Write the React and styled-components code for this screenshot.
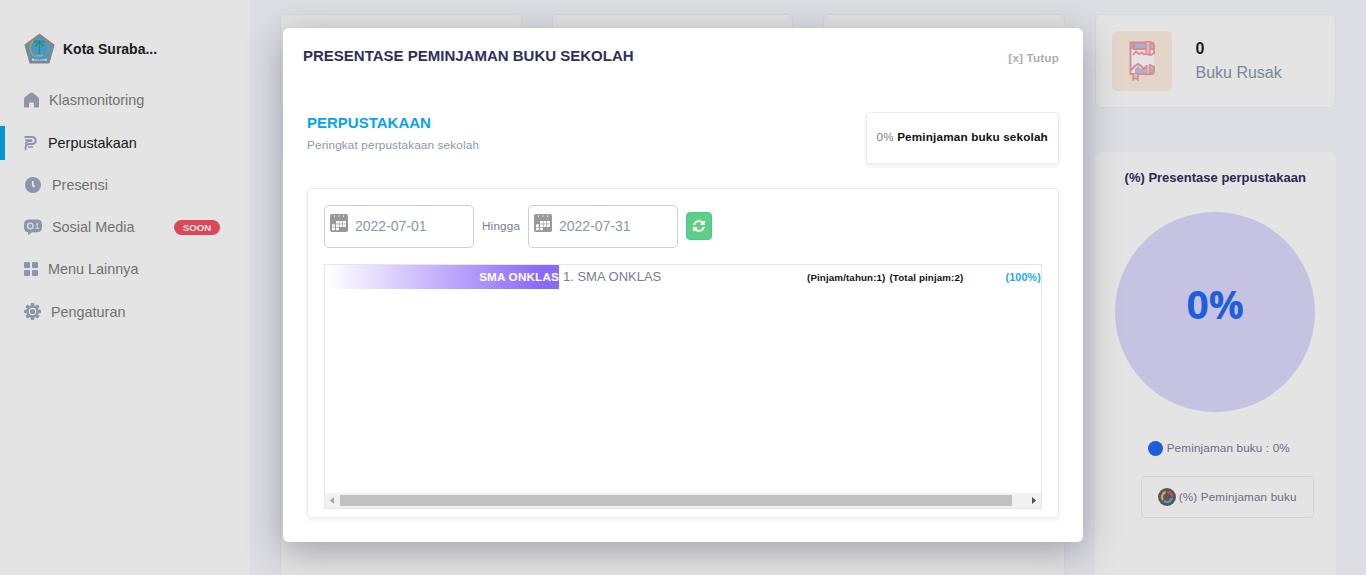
import React from "react";
import styled, { createGlobalStyle } from "styled-components";

const GlobalStyle = createGlobalStyle`
  *, *::before, *::after { box-sizing: border-box; }
  body {
    margin: 0;
    overflow: hidden;
    background: #f7f8fd;
    font: 11.7px/18px "Liberation Sans", Arial, sans-serif;
    color: #7a7c94;
  }
`;

const Page = styled.div`
  position: relative;
  display: flex;
  height: 575px;
  overflow: hidden;
`;

const Sidebar = styled.aside`
  width: 250px;
  flex: none;
  background: #fefefe;
`;

const Brand = styled.div`
  display: flex;
  align-items: center;
  gap: 8px;
  padding: 33px 0 0 24px;
  font-size: 14px;
  font-weight: 700;
  color: #202328;
`;

const NavList = styled.nav`
  padding-top: 19.3px;
  display: flex;
  flex-direction: column;
  gap: 8.25px;
`;

const NavItem = styled.a`
  display: flex;
  align-items: center;
  height: 34px;
  padding: 0 30px 0 ${(p) => (p.$active ? 19 : 24)}px;
  border-left: ${(p) => (p.$active ? "5px solid #08a3ec" : "0")};
  font-size: 14.4px;
  color: ${(p) => (p.$active ? "#1c1c1c" : "#808080")};
`;

const NavIcon = styled.svg`
  flex: none;
  margin-right: ${(p) => p.$gap}px;
  fill: #a0a5bb;
`;

const Badge = styled.span`
  margin-left: auto;
  width: 46px;
  height: 15px;
  border-radius: 8px;
  background: #f64e60;
  color: #fff;
  font-size: 9.75px;
  font-weight: 700;
  line-height: 15px;
  text-align: center;
`;

const Main = styled.main`
  flex: 1;
  padding: 14px 30px 0;
  display: flex;
  flex-direction: column;
  gap: 44px;
`;

const Stats = styled.div`
  display: grid;
  grid-template-columns: repeat(4, 1fr);
  gap: 30px;
`;

const StatCard = styled.section`
  display: flex;
  align-items: center;
  height: 94px;
  padding-left: 16px;
  border: 1px solid #f0f1f2;
  border-radius: 6px;
  background: #fefefe;
`;

const StatIcon = styled.div`
  display: grid;
  place-items: center;
  width: 60px;
  height: 60px;
  border-radius: 6px;
  background: #fdeee0;
`;

const StatText = styled.div`
  margin-left: 24px;
  font-size: 16px;
  line-height: 24px;
  color: #8799ac;
`;

const StatValue = styled.div`
  font-weight: 700;
  color: #232629;
`;

const Panels = styled.div`
  display: grid;
  grid-template-columns: 784.5px 241.5px;
  gap: 30px;
  flex: 1;
`;

const Panel = styled.section`
  border: 1px solid ${(p) => (p.$outlined ? "#f0f1f2" : "#fefefe")};
  border-bottom: 0;
  border-radius: 6px 6px 0 0;
  background: #fefefe;
  display: flex;
  flex-direction: column;
  align-items: center;
`;

const PanelTitle = styled.h2`
  margin: 16px 0 25px;
  font-size: 13px;
  line-height: 18px;
  color: #2f2f5e;
`;

const Donut = styled.div`
  width: 200px;
  height: 200px;
  border-radius: 50%;
  background: #dcd8fc;
  color: #2069f8;
  font: 700 39px/183px "Open Sans", sans-serif;
  text-align: center;
`;

const Legend = styled.div`
  display: flex;
  align-items: center;
  gap: 4px;
  margin: 27px 0 19px 7px;
  letter-spacing: 0.15px;
`;

const LegendDot = styled.span`
  width: 15px;
  height: 15px;
  border-radius: 50%;
  background: #2069f8;
`;

const LegendButton = styled.div`
  display: flex;
  align-items: center;
  gap: 3px;
  width: 173px;
  height: 42px;
  padding-left: 16px;
  margin-left: 24px;
  border: 1px solid #eceded;
  border-radius: 4px;
  letter-spacing: 0.15px;
`;

const Backdrop = styled.div`
  position: absolute;
  inset: 0;
  padding: 28px 283px 0;
  background: rgba(0, 0, 0, 0.1);
`;

const Dialog = styled.section`
  width: 800px;
  height: 514px;
  padding: 18px 24px 0;
  border-radius: 6px;
  background: #fff;
  box-shadow: 0 9px 36px rgba(50, 47, 76, 0.38);
  letter-spacing: 0.17px;
`;

const DialogHeader = styled.header`
  display: flex;
  justify-content: space-between;
  margin-left: -4px;
`;

const DialogTitle = styled.h1`
  margin: 0;
  font-size: 15px;
  line-height: 20px;
  letter-spacing: 0;
  color: #2f2f5e;
`;

const CloseButton = styled.span`
  padding-top: 3px;
  font-weight: 700;
  color: #adadad;
`;

const Intro = styled.div`
  display: flex;
  justify-content: space-between;
  margin-top: 45px;
  height: 52px;
`;

const IntroTitle = styled.h2`
  margin: 1px 0 3px;
  font-size: 15px;
  line-height: 20px;
  letter-spacing: 0;
  color: #08a3ec;
`;

const IntroNote = styled.div`
  color: #8799ac;
`;

const Summary = styled.div`
  width: 193px;
  height: 52px;
  padding: 15px 0 0 9.5px;
  border: 1px solid #ececec;
  border-radius: 4px;
  box-shadow: 0 2px 5px rgba(0, 0, 0, 0.08);
  white-space: nowrap;

  b { color: #111; }
`;

const Report = styled.div`
  height: 330px;
  margin-top: 24px;
  padding: 16px 16px 0;
  border: 1px solid #ececec;
  border-radius: 4px;
  box-shadow: 0 2px 5px rgba(0, 0, 0, 0.07);
`;

const Filters = styled.div`
  display: flex;
  align-items: center;
  gap: 8px;
  height: 43px;
`;

const FilterLabel = styled.span`
  width: 38px;
  margin-bottom: 2px;
`;

const DateField = styled.div`
  display: flex;
  gap: 7px;
  width: 150px;
  height: 43px;
  padding: 8px 5px;
  border: 1px solid #c9cfd6;
  border-radius: 5px;
  font-size: 14px;
  line-height: 24px;
  letter-spacing: 0;
  color: #8799ac;
`;

const RefreshButton = styled.button`
  display: grid;
  place-items: center;
  width: 26px;
  height: 28px;
  margin-bottom: 1px;
  padding: 0;
  border: 1px solid #48c4a0;
  border-radius: 4px;
  background: #5ed084;
`;

const Scroller = styled.div`
  display: flex;
  flex-direction: column;
  justify-content: space-between;
  width: 718px;
  height: 245px;
  margin-top: 16px;
  border: 1px solid #e6e6e8;
`;

const Row = styled.div`
  display: flex;
  height: 24px;
  line-height: 24px;
`;

const Bar = styled.div`
  width: 234px;
  background: linear-gradient(90deg, #fff 1%, #8c69f8 92%, #876df6);
  color: #fff;
  font-weight: 700;
  text-align: right;
`;

const School = styled.span`
  width: 244px;
  margin-left: 4px;
  font-size: 13px;
  letter-spacing: 0;
`;

const Counts = styled.span`
  display: flex;
  gap: 4px;
  font-size: 9.75px;
  line-height: 25px;
  font-weight: 700;
  letter-spacing: 0.13px;
  color: #111;
`;

const Percent = styled.span`
  margin-left: auto;
  font-size: 10.7px;
  font-weight: 700;
  color: #19a9ed;
`;

const Scrollbar = styled.div`
  display: flex;
  align-items: center;
  justify-content: space-between;
  height: 15px;
  padding: 0 5px;
  background: #f1f1f1;
`;

const Thumb = styled.div`
  width: 672px;
  height: 11px;
  margin-right: 14px;
  background: #c1c1c1;
`;

const CityLogo = () => (
  <svg width="31" height="31" viewBox="0 0 31 31">
    <path d="M15.5 1.200 30 12 25 30H6L1 12Z" fill="#4fabd8" stroke="#cc806a" strokeWidth="1.100" />
    <path d="M9.500 7.500C4.500 12 5 20 11.500 24" fill="none" stroke="#c8ac5e" strokeWidth="1.700" />
    <path d="M21.500 7.500C26.500 12 26 20 19.500 24" fill="none" stroke="#c6966d" strokeWidth="1.500" strokeDasharray="1.500 .6" />
    <path d="M15.500 10v11M15.500 10q-3-4-5.500 0M15.500 10q3-4 5.500 0M15.500 10q-3.500 0-3.500 3.500M15.500 10q3.500 0 3.500 3.500M15.500 10V7" fill="none" stroke="#339680" strokeWidth="1.200" />
    <path d="M11.500 21q4 2.500 8 0l-1.500 2.500h-5Z" fill="#b8c29b" />
    <path d="M8 25.500q7.500 2 15 0v2.300H8Z" fill="#f2e8f2" />
    <path d="M10 27h11" stroke="#b36777" strokeWidth=".8" strokeDasharray="1 .7" />
  </svg>
);

const HomeIcon = () => (
  <NavIcon $gap={10} width="15" height="16" viewBox="0 0 15 16">
    <path d="M6.500.8q1-.7 2 0L14 5q1 .8 1 2v7.500q0 1-1 1h-4v-4q0-1-1-1H6q-1 0-1 1v4H1q-1 0-1-1V7q0-1.200 1-2Z" />
  </NavIcon>
);

const LibraryIcon = () => (
  <NavIcon $gap={11} width="13" height="15" viewBox="0 0 13 15">
    <g fill="none" stroke="#a0a5bb" strokeWidth="1.900">
      <path d="M.5 2h7.700a3.500 3.500 0 0 1 0 7H5.200q-3.600.2-3.600 4V15" />
      <path d="M1 5h7.200M8.200 6.300H4.500Q1.600 6.600 1.600 9.500M4 12h5" strokeWidth="1.600" />
    </g>
  </NavIcon>
);

const ClockIcon = () => (
  <NavIcon $gap={11} width="17" height="16" viewBox="0 0 17 16">
    <circle cx="9" cy="8" r="8" />
    <path d="M8.800 4v4.200l1.700 2" fill="none" stroke="#fefefe" strokeWidth="1.900" />
  </NavIcon>
);

const ChatIcon = () => (
  <NavIcon $gap={10} width="18" height="17" viewBox="0 0 18 17">
    <path d="M5 .5h8q5 0 5 5v2.800q0 5-5 5H8l-3.800 3.200v-3.200Q0 13.300 0 8.300V5.500q0-5 5-5Z" />
    <circle cx="6.300" cy="7" r="2.700" fill="none" stroke="#eceef3" strokeWidth="1.500" />
    <path d="M8.800 9.500h1M12 5.600l1.300-.8v4.500m-1.500 0h3" fill="none" stroke="#e5e7ee" strokeWidth="1.200" />
  </NavIcon>
);

const GridIcon = () => (
  <NavIcon $gap={10} width="14" height="14" viewBox="0 0 14 14">
    <rect width="6" height="6" rx="1" />
    <rect x="8" width="6" height="6" rx="1" />
    <rect y="8" width="6" height="6" rx="1" />
    <rect x="8" y="8" width="6" height="6" rx="1" />
  </NavIcon>
);

const GearIcon = () => (
  <NavIcon $gap={10} width="17" height="17" viewBox="0 0 17 17">
    {[0, 45, 90, 135].map((angle) => (
      <rect key={angle} x="6.700" width="3.600" height="17" rx="1" transform={`rotate(${angle} 8.500 8.500)`} />
    ))}
    <circle cx="8.500" cy="8.500" r="6.300" />
    <circle cx="8.500" cy="8.500" r="3.200" fill="none" stroke="#fefefe" strokeWidth="1.200" />
  </NavIcon>
);

const DamagedBookIcon = () => (
  <svg width="26" height="40" viewBox="0 0 26 40">
    <path d="M1 1h21q3 0 3 3v27q0 3-3 3H1Z" fill="#fefefe" />
    <path d="M1 1h21q3 0 3 3v4H1ZM6 33v-5l3-3 3 3 4-3v8ZM21 26l4 1v5l-4 1Z" fill="#c7bfee" />
    <path d="M2 1h3v7H2Z" fill="#d8a9d2" />
    <g fill="none" stroke="#f19c9f" strokeWidth="1.900">
      <path d="M4 14l3-3.500 3 2.500 3-1.500 2 2 3-1 4 1.500 3-2V4.500q0-3-3-3H1.500V33H22q3 0 3-3v-4l-4-2-3 3-3 1-3-3-3-2-3 2-4 4M4 8h21M5 1.500V8" />
      <path d="M17 .5v12q2 2.500 4 0V.5ZM17 24v9.500h4V24" fill="#f7cdc9" strokeWidth="1.400" />
      <path d="M4 33v6l2.500-2L9 39v-6" fill="#f7cdc9" strokeWidth="1.500" />
    </g>
  </svg>
);

const CalendarIcon = () => (
  <svg width="18" height="18" viewBox="0 0 18 18">
    <rect width="18" height="18" rx="1.800" fill="#999" />
    <path d="M4.500 1v2M9 1v2M13.500 1v2" stroke="#ddd" />
    <g fill="#fff">
      {[[6, 7], [9.500, 7], [13, 7], [2, 10.300], [6, 10.300], [9.500, 10.300], [13, 10.300], [2, 13.600], [6, 13.600]].map(([x, y]) => (
        <rect key={`${x}-${y}`} x={x} y={y} width="2.900" height="2.600" />
      ))}
    </g>
  </svg>
);

const RefreshIcon = () => (
  <svg width="12" height="12" viewBox="0 0 512 512" fill="#fff">
    <path d="M371 133c-32-30-73-46-116-46-78 0-146 54-164 128-2 5-6 9-12 9H22c-8 0-13-7-12-14C31 94 133 8 256 8c66 0 127 26 171 68l35-35c15-15 41-4 41 17v134c0 13-11 24-24 24H345c-21 0-32-26-17-41ZM32 296h134c21 0 32 26 17 41l-41 41c31 30 72 46 115 46 78 0 146-53 164-128 2-5 6-9 12-9h57c8 0 13 7 12 14-21 116-123 203-246 203-66 0-127-26-171-68l-35 35C21 486-5 475-5 454V320c0-13 11-24 24-24Z" />
  </svg>
);

const ChartIcon = () => (
  <svg width="18" height="18" viewBox="0 0 18 18" fill="none" strokeWidth="2.200">
    <circle cx="9" cy="9" r="9" fill="#626366" />
    <path d="M9.300 4A5 5 0 0 1 14 8.500" stroke="#ee5664" />
    <path d="M13.900 10A5 5 0 0 1 6 13" stroke="#60a9e4" />
    <path d="M5 12A5 5 0 0 1 7.800 4.100" stroke="#edbd5a" />
  </svg>
);

const ArrowIcon = ({ right }) => (
  <svg width="4" height="7" viewBox="0 0 4 7">
    <path d={right ? "M0 0v7l4-3.500Z" : "M4 0v7L0 3.500Z"} fill={right ? "#505050" : "#a3a3a3"} />
  </svg>
);

const NAV = [
  { label: "Klasmonitoring", Icon: HomeIcon },
  { label: "Perpustakaan", Icon: LibraryIcon, active: true },
  { label: "Presensi", Icon: ClockIcon },
  { label: "Sosial Media", Icon: ChatIcon, badge: "SOON" },
  { label: "Menu Lainnya", Icon: GridIcon },
  { label: "Pengaturan", Icon: GearIcon },
];

export default function App() {
  return (
    <>
      <GlobalStyle />
      <Page>
        <Sidebar>
          <Brand><CityLogo />Kota Suraba...</Brand>
          <NavList>
            {NAV.map(({ label, Icon, active, badge }) => (
              <NavItem key={label} $active={active}>
                <Icon />{label}{badge && <Badge>{badge}</Badge>}
              </NavItem>
            ))}
          </NavList>
        </Sidebar>
        <Main>
          <Stats>
            <StatCard />
            <StatCard />
            <StatCard />
            <StatCard>
              <StatIcon><DamagedBookIcon /></StatIcon>
              <StatText><StatValue>0</StatValue>Buku Rusak</StatText>
            </StatCard>
          </Stats>
          <Panels>
            <Panel $outlined />
            <Panel>
              <PanelTitle>(%) Presentase perpustakaan</PanelTitle>
              <Donut>0%</Donut>
              <Legend><LegendDot />Peminjaman buku : 0%</Legend>
              <LegendButton><ChartIcon />(%) Peminjaman buku</LegendButton>
            </Panel>
          </Panels>
        </Main>
        <Backdrop>
          <Dialog>
            <DialogHeader>
              <DialogTitle>PRESENTASE PEMINJAMAN BUKU SEKOLAH</DialogTitle>
              <CloseButton>[x] Tutup</CloseButton>
            </DialogHeader>
            <Intro>
              <div>
                <IntroTitle>PERPUSTAKAAN</IntroTitle>
                <IntroNote>Peringkat perpustakaan sekolah</IntroNote>
              </div>
              <Summary>0% <b>Peminjaman buku sekolah</b></Summary>
            </Intro>
            <Report>
              <Filters>
                <DateField><CalendarIcon />2022-07-01</DateField>
                <FilterLabel>Hingga</FilterLabel>
                <DateField><CalendarIcon />2022-07-31</DateField>
                <RefreshButton><RefreshIcon /></RefreshButton>
              </Filters>
              <Scroller>
                <Row>
                  <Bar>SMA ONKLAS</Bar>
                  <School>1. SMA ONKLAS</School>
                  <Counts><span>(Pinjam/tahun:1)</span><span>(Total pinjam:2)</span></Counts>
                  <Percent>(100%)</Percent>
                </Row>
                <Scrollbar><ArrowIcon /><Thumb /><ArrowIcon right /></Scrollbar>
              </Scroller>
            </Report>
          </Dialog>
        </Backdrop>
      </Page>
    </>
  );
}
